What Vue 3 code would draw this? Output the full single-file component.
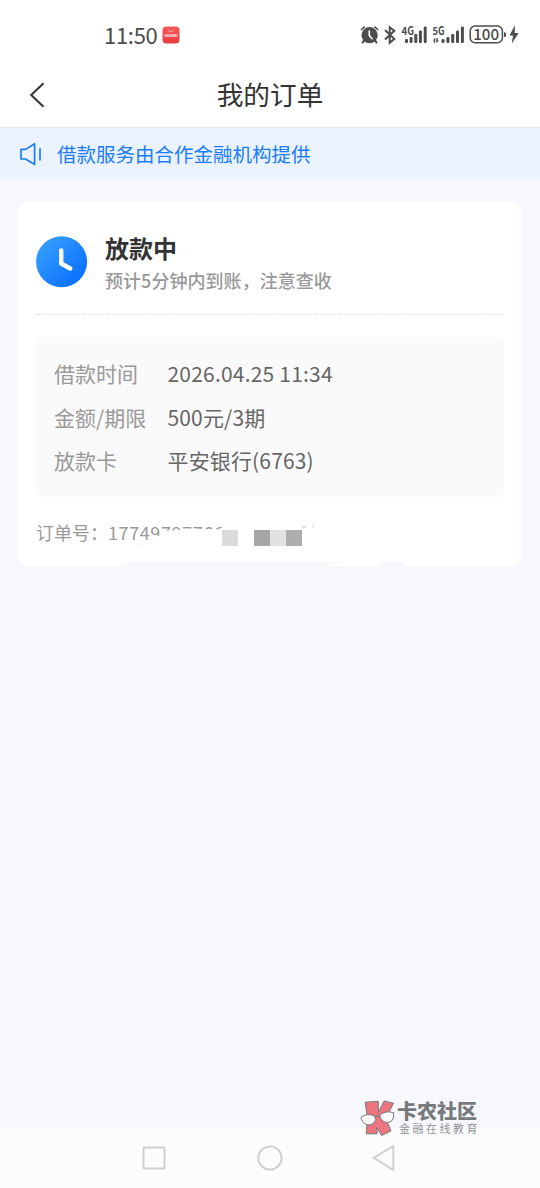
<template>
  <div class="page">
    <div class="status-bar">
      <div class="status-left">
        <span class="time">11:50</span>
        <svg class="app-badge" width="18" height="18" viewBox="0 0 18 18">
          <defs>
            <linearGradient id="badgeFill" x1="0" y1="0" x2="0" y2="1">
              <stop offset="0" stop-color="#fa5658" />
              <stop offset="1" stop-color="#e93a42" />
            </linearGradient>
          </defs>
          <rect x="0.5" y="0.5" width="17" height="17" rx="4" fill="url(#badgeFill)" />
          <path d="M6.2 3.6Q6.8 5.7 9 5.7T11.8 3.6" fill="none" stroke="#ffc9c9" stroke-width=".7" />
          <text x="9" y="11.4" text-anchor="middle" textLength="13" lengthAdjust="spacingAndGlyphs">HUAWEI</text>
        </svg>
      </div>
      <svg class="status-icons" width="162" height="24" viewBox="358 23 162 24">
        <g fill="none" stroke="#4c4c4c">
          <path d="M361 30l3.8-3.4M378.2 30l-3.8-3.4" stroke-width="1.6" />
          <path d="M364.4 40.2l-2.2 2.9M374.8 40.2l2.2 2.9" stroke-width="2" />
          <circle cx="369.6" cy="35.2" r="8.1" fill="#4c4c4c" stroke="none" />
          <path d="M369.3 30.6v4.8l3.2 3.8" stroke="#fff" stroke-width="1.6" />
          <path d="M385 30l9.3 8.9-4.6 3.9V27.2l4.6 3.6-9.3 8.8" stroke-width="2" />
          <rect x="470.2" y="26" width="32.2" height="16.8" rx="5" stroke-width="1.5" />
        </g>
        <g fill="#4c4c4c">
          <rect
            v-for="bar in signalBars"
            :key="bar.x"
            :x="bar.x"
            :y="43 - bar.h"
            width="3"
            :height="bar.h"
            rx="1.2"
          />
          <path d="M504 32.2q2 0 2 1.2v2.4q0 1.2-2 1.2z" />
          <path d="M515 25.3l-5.6 10.3h3.6l-1.2 8 6.8-10.5h-3.9z" />
          <path d="M432.7 40.4l2.5-2.6v5h-1.4v-2.4zM436.3 38h1.4v2.4h1.5l-2.9 2.6z" />
          <text class="network" x="401.5" y="34.5" textLength="12.5" lengthAdjust="spacingAndGlyphs">4G</text>
          <text class="network" x="432.5" y="34.5" textLength="12" lengthAdjust="spacingAndGlyphs">5G</text>
          <text class="battery" x="486.2" y="40.1" text-anchor="middle" textLength="26" lengthAdjust="spacingAndGlyphs">100</text>
        </g>
      </svg>
    </div>

    <header class="nav-bar">
      <svg class="back" width="18" height="28" viewBox="0 0 18 28">
        <path d="M15.5 2.2L3.2 14l12.3 11.8" fill="none" stroke="#333" stroke-width="2" />
      </svg>
      <h1>我的订单</h1>
    </header>

    <div class="notice">
      <svg width="24" height="24" viewBox="0 0 24 24">
        <path
          d="M2 7.4h4.6L15.6 1.8v20.6l-9-5.4H2zM21 6.2v12.4"
          fill="none"
          stroke="#1b7cff"
          stroke-width="1.7"
          stroke-linejoin="round"
        />
      </svg>
      <span>借款服务由合作金融机构提供</span>
    </div>

    <main class="card">
      <div class="card-head">
        <svg width="52" height="52" viewBox="0 0 52 52">
          <defs>
            <linearGradient id="clockFill" x1="0" y1="0" x2="1" y2="1">
              <stop offset=".1" stop-color="#35a0ff" />
              <stop offset=".9" stop-color="#096dff" />
            </linearGradient>
          </defs>
          <circle cx="25.6" cy="25.8" r="25.5" fill="url(#clockFill)" />
          <path
            d="M25.2 14.5v13l9 5"
            fill="none"
            stroke="#fff"
            stroke-width="4.4"
            stroke-linecap="round"
            stroke-linejoin="round"
          />
        </svg>
        <div class="card-title">
          <h2>放款中</h2>
          <p>预计5分钟内到账，注意查收</p>
        </div>
      </div>
      <svg class="divider" width="468" height="1">
        <path d="M0 .5h468" stroke="#e8e8e8" stroke-dasharray="4 1.8" />
      </svg>

      <dl class="details">
        <div v-for="row in rows" :key="row.label" class="row">
          <dt>{{ row.label }}</dt>
          <dd :class="row.type">{{ row.value }}</dd>
        </div>
      </dl>

      <div class="order-no">
        <span class="order-label">订单号：</span>
        <span class="order-value">17749797766</span>
        <!-- masked part of the order number -->
        <svg class="mask" width="504" height="52" viewBox="18 518 504 52">
          <path d="M148 546l2-9 9-1 2-5 16-.5 10-2 31 1 6-3 6 0v22h-82z" fill="#fff" />
          <path d="M135 545q4-3 8-1l-3 2z" fill="#fafafa" />
          <path d="M302 527h4M312 526l2 1" stroke="#aaa" stroke-width=".7" />
          <path d="M222 530h16v16h-16z" fill="#dbdbdb" />
          <path d="M254 530h16v16h-16z" fill="#a5a5a5" />
          <path d="M270 530h16v16h-16z" fill="#e2e2e2" />
          <path d="M286 530h16v16h-16z" fill="#adadad" />
          <path d="M125 562h217l-16 4H128zM381 562h24v4h-22z" fill="#f6f8fb" />
        </svg>
      </div>
    </main>

    <footer class="system-nav">
      <svg width="24" height="24" viewBox="0 0 24 24">
        <rect x="1.5" y="1.5" width="21" height="21" rx="1" />
      </svg>
      <svg width="26" height="26" viewBox="0 0 26 26">
        <circle cx="13" cy="13" r="11.6" />
      </svg>
      <svg width="24" height="26" viewBox="0 0 24 26">
        <path d="M1.8 12.8L20.5 1.4q.8-.4.8.6v22q0 1-.8.6z" />
      </svg>
    </footer>

    <div class="watermark">
      <svg width="36" height="37" viewBox="0 0 36 37">
        <g stroke="#77797c" stroke-width="1" stroke-linejoin="round">
          <path d="M5.2 2.2L18.4 1.4l-.2 11L24.2 1l9.3 2.2-7.8 15.3 5.3 12.5-9.5 4.5-4.5-8 .2 6.3H6.2l1.2-16z" fill="#ec7580" />
          <path d="M1 17.2q6-4.4 13.6-1.4 2.6 3.3-.5 7-3 3.2-7.5 1.8Q1.7 22.6 1 17.2z" fill="#fafafa" />
          <path d="M19.7 15.4q5.5-5.3 14-2.7.8 4.7-2 8.2-3.5 3.2-8 .8-3.2-2.1-4-6.3z" fill="#fafafa" />
          <path d="M14.6 17.2l5.1-1.8" fill="none" />
        </g>
      </svg>
      <div class="watermark-text">
        <strong>卡农社区</strong>
        <span>金融在线教育</span>
      </div>
    </div>
  </div>
</template>

<script setup>
const rows = [
  { label: '借款时间', value: '2026.04.25 11:34', type: 'date' },
  { label: '金额/期限', value: '500元/3期', type: 'amount' },
  { label: '放款卡', value: '平安银行(6763)', type: 'bank' },
]

const signalBars = [
  { x: 405, h: 4 },
  { x: 409.6, h: 6 },
  { x: 414.3, h: 9 },
  { x: 418.9, h: 12.5 },
  { x: 423.7, h: 16.5 },
  { x: 441.5, h: 4 },
  { x: 446.4, h: 6 },
  { x: 451.2, h: 9 },
  { x: 456, h: 12.5 },
  { x: 460.9, h: 16.5 },
]
</script>

<style>
body {
  margin: 0;
}
</style>

<style scoped>
.page {
  display: flex;
  flex-direction: column;
  position: relative;
  width: 540px;
  height: 1188px;
  overflow: hidden;
  background: #f6f8fb;
  font-family: 'Noto Sans CJK SC', sans-serif;
}

svg {
  display: block;
  flex-shrink: 0;
}

h1,
h2,
p,
dl,
dd {
  margin: 0;
}

.status-bar {
  display: flex;
  justify-content: space-between;
  box-sizing: border-box;
  height: 62px;
  padding: 23px 20px 0 104px;
  background: #fff;
}

.status-left {
  display: flex;
  align-items: center;
  gap: 5px;
  height: 24px;
}

.time {
  width: 53px;
  margin-top: -3px;
  color: #4c4c4c;
  font-size: 22px;
  line-height: 24px;
  letter-spacing: -0.3px;
}

.app-badge text {
  fill: #fff;
  font-size: 3.8px;
  font-weight: 700;
}

.status-icons {
  overflow: visible;
}

.network {
  font-size: 11px;
  font-weight: 700;
}

.battery {
  font-size: 15.5px;
  font-weight: 500;
}

.nav-bar {
  display: grid;
  grid-template-columns: 60px 1fr 60px;
  align-items: center;
  box-sizing: border-box;
  height: 65px;
  background: #fff;
}

.back {
  margin-left: 28px;
}

.nav-bar h1 {
  margin-top: -2px;
  color: #333;
  font-size: 26.7px;
  font-weight: 400;
  line-height: 40px;
  text-align: center;
}

.notice {
  display: flex;
  align-items: center;
  gap: 14px;
  box-sizing: border-box;
  height: 53px;
  padding-left: 19px;
  border-top: 1px solid #e2e9f2;
  background: #eaf3ff;
  color: #1b7cff;
  font-size: 19.5px;
  line-height: 30px;
}

.card {
  box-sizing: border-box;
  height: 364px;
  margin: 22px 18px 0;
  padding: 34px 18px 0;
  border-radius: 11px;
  background: #fff;
}

.card-head {
  display: flex;
  gap: 17px;
  height: 78px;
}

.card-title {
  margin-top: -5px;
}

.card-title h2 {
  color: #333;
  font-size: 24px;
  font-weight: 700;
  line-height: 34px;
}

.card-title p {
  color: #999;
  font-size: 18px;
  font-weight: 500;
  line-height: 30px;
  letter-spacing: 0.05px;
}

.details {
  display: flex;
  flex-direction: column;
  box-sizing: border-box;
  height: 160px;
  margin-top: 22px;
  padding: 15px 18px;
  border-radius: 6px;
  background: #fafafa;
}

.row {
  display: flex;
  height: 43.5px;
  font-size: 21px;
  line-height: 43.5px;
}

.row dt {
  width: 113.5px;
  color: #999;
}

.row dd {
  color: #666;
}

.row .date {
  letter-spacing: 0.2px;
}

.row .amount,
.row .bank {
  letter-spacing: 0.15px;
}

.order-no {
  display: flex;
  position: relative;
  height: 32px;
  margin-top: 19px;
  color: #999;
  font-size: 18px;
  line-height: 32px;
}

.order-label {
  width: 72px;
}

.order-value {
  letter-spacing: 0.6px;
}

.mask {
  position: absolute;
  top: 2px;
  left: -18px;
}

.system-nav {
  display: flex;
  align-items: center;
  box-sizing: border-box;
  height: 60px;
  margin-top: auto;
  padding: 0 0 0 142px;
  background: #fcfcfc;
}

.system-nav svg {
  margin-right: 90px;
  fill: none;
  stroke: #d0d0d0;
  stroke-width: 2;
}

.system-nav svg:first-child {
  margin-right: 91px;
}

.system-nav svg:last-child {
  margin: 0 0 0 -1px;
}

.watermark {
  display: flex;
  position: absolute;
  top: 1100px;
  left: 360px;
  color: #77797c;
}

.watermark-text {
  display: flex;
  flex-direction: column;
  padding-left: 1px;
}

.watermark-text strong {
  font-size: 20px;
  font-weight: 900;
  line-height: 22px;
}

.watermark-text span {
  padding-left: 2px;
  color: #929497;
  font-size: 11px;
  line-height: 13px;
  letter-spacing: 2.5px;
}
</style>
